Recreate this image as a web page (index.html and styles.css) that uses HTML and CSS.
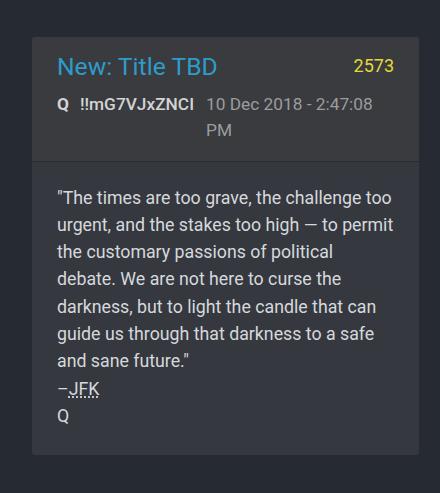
FILE: index.html
```html
<!DOCTYPE html>
<html>
<head>
<meta charset="utf-8">
<link rel="stylesheet" href="styles.css">
</head>
<body>
<article class="post">
  <header class="post-head">
    <div class="title-row">
      <h1 class="title">New: Title TBD</h1>
      <span class="num">2573</span>
    </div>
    <div class="meta">
      <span class="name">Q</span>
      <span class="trip">!!mG7VJxZNCI</span>
      <span class="time">10 Dec 2018 - 2:47:08 PM</span>
    </div>
  </header>
  <div class="post-body">
    <p>"The times are too grave, the challenge too urgent, and the stakes too high — to permit the customary passions of political debate. We are not here to curse the darkness, but to light the candle that can guide us through that darkness to a safe and sane future."<br>–<abbr class="abbr">JFK</abbr><br>Q</p>
  </div>
</article>
</body>
</html>
```

FILE: styles.css
```css
html, body {
  margin: 0;
  padding: 0;
  background: #262a33;
}
body {
  font-family: Roboto, "Liberation Sans", Arial, sans-serif;
  padding: 37px 21px 38px 32px;
}
.post {
  width: 387px;
  height: 418px;
  box-sizing: border-box;
  background: #35383f;
  border-radius: 3px;
  overflow: hidden;
}
.post-head {
  background: #3a3b3e;
  padding: 15px 25px 18px 25px;
  border-bottom: 1px solid #2a2d33;
}
.title-row {
  display: flex;
  justify-content: space-between;
  align-items: flex-start;
}
.title {
  margin: 0;
  font-size: 24.7px;
  font-weight: normal;
  line-height: 29px;
  color: #2d9ccc;
}
.num {
  font-size: 18px;
  line-height: 27px;
  color: #e3d83a;
}
.meta {
  display: flex;
  align-items: flex-start;
  margin-top: 10px;
  font-size: 17.3px;
  line-height: 26px;
}
.name {
  font-weight: bold;
  color: #d2d3d5;
  margin-right: 11px;
}
.trip {
  color: #d2d3d5;
  font-weight: 500;
  margin-right: 12px;
}
.time {
  color: #9b9c9e;
  flex: 1;
}
.post-body {
  padding: 22.5px 25.5px 20px 25px;
}
.post-body p {
  margin: 0;
  font-size: 17.75px;
  line-height: 27.3px;
  color: #d6d8dc;
}
.abbr {
  text-decoration: underline dotted;
  text-underline-offset: 2px;
}
```
